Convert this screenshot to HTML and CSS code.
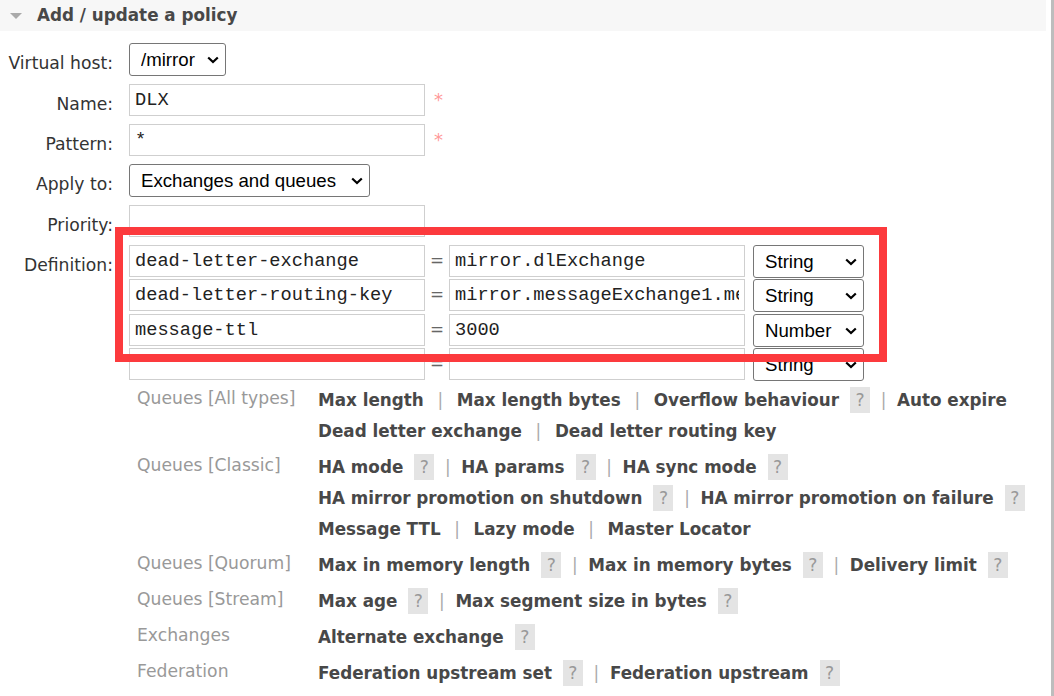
FILE: index.html
```html
<!DOCTYPE html>
<html lang="en">
<head>
<meta charset="utf-8">
<title>Add / update a policy</title>
<link rel="stylesheet" href="styles.css">
</head>
<body>
<div class="page">
  <div class="section-head">
    <span class="tri"></span>
    <h2>Add / update a policy</h2>
  </div>

  <div class="form">
    <label class="lbl">Virtual host:</label>
    <div class="field">
      <span class="selwrap w-vhost">
        <select class="sel"><option>/mirror</option></select>
        <svg class="chev" viewBox="0 0 12 8" width="12" height="8"><path d="M1.2 1.5 L6 6 L10.8 1.5" fill="none" stroke="#000" stroke-width="2.2"/></svg>
      </span>
    </div>

    <label class="lbl">Name:</label>
    <div class="field">
      <input class="inp w-main" type="text" value="DLX"><span class="mand">*</span>
    </div>

    <label class="lbl">Pattern:</label>
    <div class="field">
      <input class="inp w-main" type="text" value="*"><span class="mand">*</span>
    </div>

    <label class="lbl">Apply to:</label>
    <div class="field">
      <span class="selwrap w-apply">
        <select class="sel"><option>Exchanges and queues</option><option>Exchanges</option><option>Queues</option></select>
        <svg class="chev" viewBox="0 0 12 8" width="12" height="8"><path d="M1.2 1.5 L6 6 L10.8 1.5" fill="none" stroke="#000" stroke-width="2.2"/></svg>
      </span>
    </div>

    <label class="lbl">Priority:</label>
    <div class="field">
      <input class="inp w-main" type="text" value="">
    </div>

    <label class="lbl">Definition:</label>
    <div class="field">
      <div class="def">
        <input class="inp" type="text" value="dead-letter-exchange">
        <span class="eq">=</span>
        <input class="inp" type="text" value="mirror.dlExchange">
        <span class="selwrap w-type">
          <select class="sel"><option>String</option><option>Number</option><option>Boolean</option><option>List</option></select>
          <svg class="chev" viewBox="0 0 12 8" width="12" height="8"><path d="M1.2 1.5 L6 6 L10.8 1.5" fill="none" stroke="#000" stroke-width="2.2"/></svg>
        </span>

        <input class="inp" type="text" value="dead-letter-routing-key">
        <span class="eq">=</span>
        <input class="inp" type="text" value="mirror.messageExchange1.messageQueue1">
        <span class="selwrap w-type">
          <select class="sel"><option>String</option><option>Number</option><option>Boolean</option><option>List</option></select>
          <svg class="chev" viewBox="0 0 12 8" width="12" height="8"><path d="M1.2 1.5 L6 6 L10.8 1.5" fill="none" stroke="#000" stroke-width="2.2"/></svg>
        </span>

        <input class="inp" type="text" value="message-ttl">
        <span class="eq">=</span>
        <input class="inp" type="text" value="3000">
        <span class="selwrap w-type">
          <select class="sel"><option>Number</option><option>String</option><option>Boolean</option><option>List</option></select>
          <svg class="chev" viewBox="0 0 12 8" width="12" height="8"><path d="M1.2 1.5 L6 6 L10.8 1.5" fill="none" stroke="#000" stroke-width="2.2"/></svg>
        </span>

        <input class="inp" type="text" value="">
        <span class="eq">=</span>
        <input class="inp" type="text" value="">
        <span class="selwrap w-type">
          <select class="sel"><option>String</option><option>Number</option><option>Boolean</option><option>List</option></select>
          <svg class="chev" viewBox="0 0 12 8" width="12" height="8"><path d="M1.2 1.5 L6 6 L10.8 1.5" fill="none" stroke="#000" stroke-width="2.2"/></svg>
        </span>
      </div>

      <div class="args">
        <div class="cat">Queues [All types]</div>
        <div class="links">
          <div class="line">
            <span class="alink">Max length</span><span class="sep">|</span>
            <span class="alink">Max length bytes</span><span class="sep">|</span>
            <span class="alink">Overflow behaviour</span><span class="help">?</span><span class="sep">|</span>
            <span class="alink">Auto expire</span>
          </div>
          <div class="line">
            <span class="alink">Dead letter exchange</span><span class="sep">|</span>
            <span class="alink">Dead letter routing key</span>
          </div>
        </div>

        <div class="cat">Queues [Classic]</div>
        <div class="links">
          <div class="line">
            <span class="alink">HA mode</span><span class="help">?</span><span class="sep">|</span>
            <span class="alink">HA params</span><span class="help">?</span><span class="sep">|</span>
            <span class="alink">HA sync mode</span><span class="help">?</span>
          </div>
          <div class="line">
            <span class="alink">HA mirror promotion on shutdown</span><span class="help">?</span><span class="sep">|</span>
            <span class="alink">HA mirror promotion on failure</span><span class="help">?</span>
          </div>
          <div class="line">
            <span class="alink">Message TTL</span><span class="sep">|</span>
            <span class="alink">Lazy mode</span><span class="sep">|</span>
            <span class="alink">Master Locator</span>
          </div>
        </div>

        <div class="cat">Queues [Quorum]</div>
        <div class="links">
          <div class="line">
            <span class="alink">Max in memory length</span><span class="help">?</span><span class="sep">|</span>
            <span class="alink">Max in memory bytes</span><span class="help">?</span><span class="sep">|</span>
            <span class="alink">Delivery limit</span><span class="help">?</span>
          </div>
        </div>

        <div class="cat">Queues [Stream]</div>
        <div class="links">
          <div class="line">
            <span class="alink">Max age</span><span class="help">?</span><span class="sep">|</span>
            <span class="alink">Max segment size in bytes</span><span class="help">?</span>
          </div>
        </div>

        <div class="cat">Exchanges</div>
        <div class="links">
          <div class="line">
            <span class="alink">Alternate exchange</span><span class="help">?</span>
          </div>
        </div>

        <div class="cat">Federation</div>
        <div class="links">
          <div class="line">
            <span class="alink">Federation upstream set</span><span class="help">?</span><span class="sep">|</span>
            <span class="alink">Federation upstream</span><span class="help">?</span>
          </div>
        </div>
      </div>
    </div>
  </div>

  <div class="annot"></div>
</div>
</body>
</html>
```

FILE: styles.css
```css
* { box-sizing: border-box; }

html, body {
  margin: 0;
  padding: 0;
  background: #fff;
}

body {
  font-family: "DejaVu Sans", Verdana, sans-serif;
  font-size: 16.8px;
  color: #444;
}

.page {
  position: relative;
  width: 1054px;
  height: 696px;
  overflow: hidden;
  border-right: 3px solid #bdbdbd;
}

/* header */
.section-head {
  width: 1046px;
  height: 31px;
  background: #f7f7f7;
  display: flex;
  align-items: center;
  padding-left: 10px;
}

.tri {
  width: 0;
  height: 0;
  border-left: 6px solid transparent;
  border-right: 6px solid transparent;
  border-top: 6px solid #aaa;
  margin-right: 15px;
}

.section-head h2 {
  margin: 0 0 2px 0;
  font-size: 16.8px;
  font-weight: bold;
  color: #484848;
  line-height: 20px;
}

/* form */
.form {
  display: grid;
  grid-template-columns: 113px 1fr;
  column-gap: 16px;
  row-gap: 8px;
  padding-top: 12px;
}

.lbl {
  text-align: right;
  padding-top: 10px;
  line-height: 20px;
  font-size: 17.2px;
  color: #333;
  white-space: nowrap;
}

.field {
  display: flex;
  flex-direction: column;
  align-items: flex-start;
}

.field:has(> .mand) {
  flex-direction: row;
}

.inp {
  height: 32px;
  border: 1px solid #cfcfcf;
  border-radius: 0;
  font-family: "Liberation Mono", "Courier New", monospace;
  font-size: 18.67px;
  color: #222;
  padding: 0 5px;
  margin: 0;
  background: #fff;
  outline: none;
}

.w-main { width: 296px; }

.mand {
  color: #f99;
  margin-left: 9px;
  padding-top: 4px;
  line-height: 24px;
  font-size: 18px;
}

/* selects */
.selwrap {
  position: relative;
  display: inline-block;
  height: 33px;
}

.sel {
  appearance: none;
  -webkit-appearance: none;
  width: 100%;
  height: 33px;
  margin: 0;
  border: 1px solid #767676;
  border-radius: 3px;
  background: #fff;
  color: #000;
  font-family: "Liberation Sans", Arial, sans-serif;
  font-size: 18.67px;
  padding: 0 20px 0 11px;
  outline: none;
}

.chev {
  position: absolute;
  right: 7px;
  top: 13px;
  pointer-events: none;
}

.w-vhost { width: 97px; }
.w-apply { width: 241px; }
.w-type { width: 111px; margin-left: 8px; }

/* definition grid */
.def {
  display: grid;
  grid-template-columns: 296px 24px 296px auto;
  grid-auto-rows: 34.33px;
  align-items: start;
}

.def .inp { width: 296px; }

.eq {
  text-align: center;
  color: #666;
  line-height: 31px;
  font-size: 16.8px;
}

/* argument links */
.args {
  margin-top: 2px;
  display: grid;
  grid-template-columns: 181px auto;
  row-gap: 5px;
  padding-left: 8px;
}

.cat {
  color: #999;
  font-size: 17.2px;
  line-height: 29px;
  white-space: nowrap;
}

.links { display: flex; flex-direction: column; }

.line {
  display: flex;
  align-items: center;
  height: 31px;
  white-space: nowrap;
}

.alink {
  font-weight: bold;
  color: #484848;
}

.sep {
  display: inline-block;
  width: 33px;
  text-align: center;
  color: #aaa;
}

.help + .sep { width: 27px; }

.help {
  display: inline-flex;
  justify-content: center;
  align-items: center;
  width: 20px;
  height: 26px;
  margin-left: 11px;
  background: #e4e4e4;
  color: #999;
  font-size: 17.2px;
}

/* annotation overlay */
.annot {
  position: absolute;
  left: 115px;
  top: 227px;
  width: 772px;
  height: 135px;
  border: 8px solid #fc3a3d;
  pointer-events: none;
}
```
